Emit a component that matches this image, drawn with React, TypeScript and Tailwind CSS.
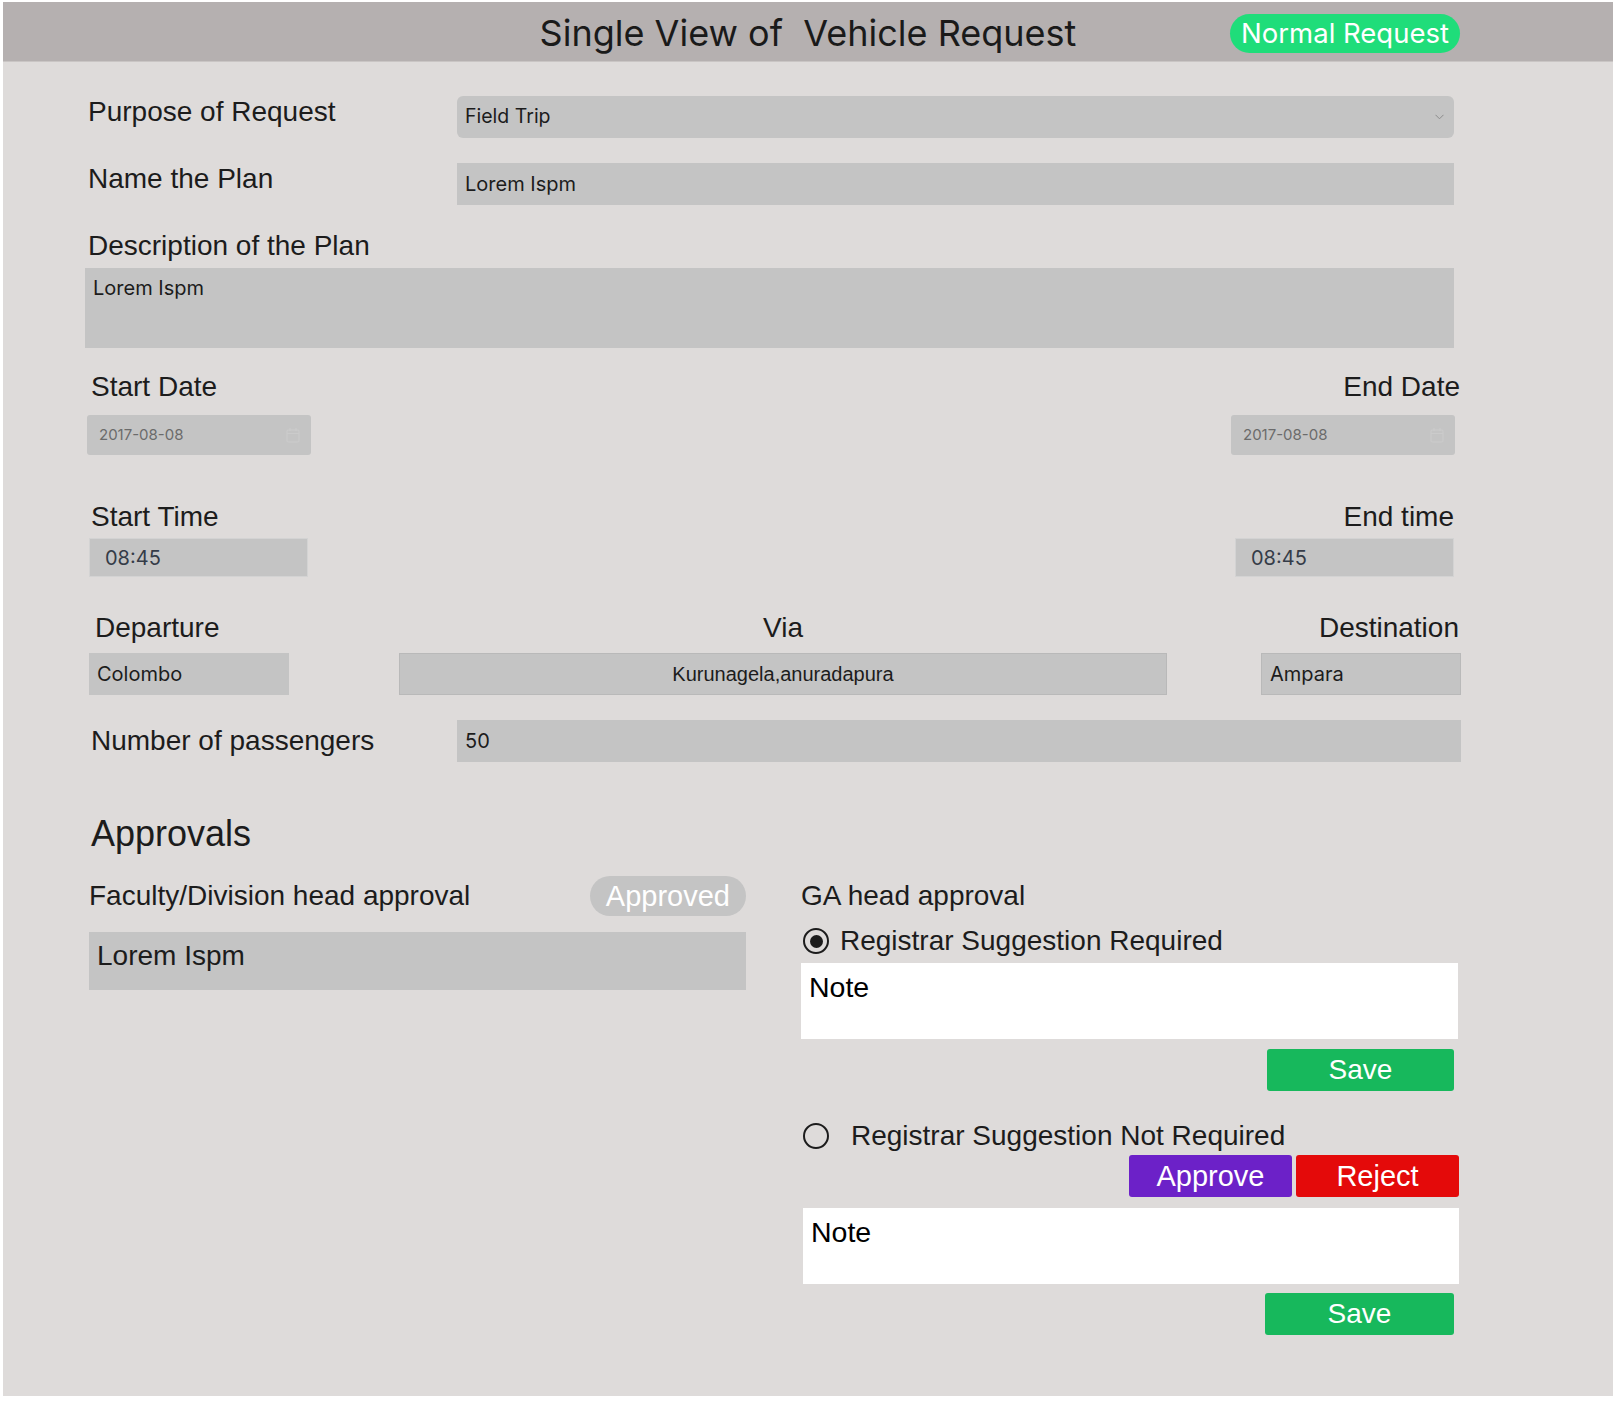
import React from "react";

const ARIAL = "font-['Liberation_Sans',Arial,sans-serif]";

function Label({ children, className = "" }: { children: React.ReactNode; className?: string }) {
  return (
    <div className={`${ARIAL} text-[28px] leading-[32px] text-[#1c1c1c] whitespace-nowrap ${className}`}>{children}</div>
  );
}

function DateBox({ className = "" }: { className?: string }) {
  return (
    <div className={`h-[40px] w-[224px] rounded-[3px] bg-[#c4c4c4] flex items-center justify-between pl-[12px] pr-[11px] ${className}`}>
      <span className="text-[15px] text-[#6b6b6b]">2017-08-08</span>
      <svg width="14" height="16" viewBox="0 0 14 16" fill="none">
        <rect x="1" y="3" width="12" height="12" rx="1.5" stroke="#cbcbcb" strokeWidth="1.2" />
        <line x1="1" y1="6.5" x2="13" y2="6.5" stroke="#cbcbcb" strokeWidth="1.2" />
        <line x1="4" y1="1" x2="4" y2="4" stroke="#cbcbcb" strokeWidth="1.2" />
        <line x1="10" y1="1" x2="10" y2="4" stroke="#cbcbcb" strokeWidth="1.2" />
      </svg>
    </div>
  );
}

function TimeBox({ className = "" }: { className?: string }) {
  return (
    <div className={`h-[39px] w-[219px] bg-[#c4c4c4] border border-[#d3d3d3] flex items-center pl-[15px] ${className}`}>
      <span className="text-[20px] text-[#353c48]">08:45</span>
    </div>
  );
}

function Radio({ checked }: { checked: boolean }) {
  return (
    <span className="w-[26px] h-[26px] rounded-full border-[2.5px] border-[#1c1c1c] flex items-center justify-center shrink-0">
      {checked && <span className="w-[13px] h-[13px] rounded-full bg-[#1c1c1c]" />}
    </span>
  );
}

export default function App() {
  return (
    <div className="bg-white pl-[3px] pt-[2px] pr-[2px] pb-[6px] font-['Inter',sans-serif] text-[#1c1c1c]">
      <div className="bg-[#dedbda] h-[1394px]">
        <header className="h-[60px] bg-[#b5b0b0] border-b border-[#c9c5c4] grid grid-cols-[1fr_auto_1fr] items-center">
          <div />
          <h1 className="text-[36px] leading-[42px] text-[#1a1a1a] whitespace-pre pt-[2px]">Single View of  Vehicle Request</h1>
          <div className="flex justify-end pr-[153px] pt-[3px]">
            <span className="h-[39px] px-[11px] rounded-full bg-[#1fdd7a] text-white text-[27.5px] leading-[39px] whitespace-nowrap">
              Normal Request
            </span>
          </div>
        </header>

        <main className="pl-[85px] pr-[152px]">
          {/* Purpose */}
          <div className="flex items-start mt-[34px]">
            <Label className="w-[369px]">Purpose of Request</Label>
            <div className="w-[997px] h-[42px] rounded-[6px] bg-[#c4c4c4] flex items-center justify-between pl-[8px] pr-[10px]">
              <span className="text-[19.5px]">Field Trip</span>
              <svg width="9" height="6" viewBox="0 0 9 6" fill="none">
                <path d="M0.5 0.8 L4.5 4.8 L8.5 0.8" stroke="#8c8c8c" strokeWidth="1" />
              </svg>
            </div>
          </div>

          {/* Name */}
          <div className="flex items-start mt-[25px]">
            <Label className="w-[369px]">Name the Plan</Label>
            <div className="w-[997px] h-[42px] bg-[#c4c4c4] flex items-center pl-[8px]">
              <span className="text-[20px]">Lorem Ispm</span>
            </div>
          </div>

          {/* Description */}
          <Label className="mt-[25px]">Description of the Plan</Label>
          <div className="-ml-[3px] w-[1369px] h-[80px] mt-[6px] bg-[#c4c4c4] pl-[8px] pt-[5px]">
            <span className="text-[20px]">Lorem Ispm</span>
          </div>

          {/* Dates */}
          <div className="flex justify-between mt-[23px] pl-[3px] pr-[1px]">
            <Label>Start Date</Label>
            <Label>End Date</Label>
          </div>
          <div className="flex justify-between mt-[12px] -ml-[1px] pr-[6px]">
            <DateBox />
            <DateBox />
          </div>

          {/* Times */}
          <div className="flex justify-between mt-[46px] pl-[3px] pr-[7px]">
            <Label>Start Time</Label>
            <Label>End time</Label>
          </div>
          <div className="flex justify-between mt-[5px] pl-[1px] pr-[7px]">
            <TimeBox />
            <TimeBox />
          </div>

          {/* Route */}
          <div className="flex mt-[35px]">
            <div className="ml-[1px] w-[200px]">
              <Label className="pl-[6px]">Departure</Label>
              <div className="mt-[9px] h-[42px] bg-[#c4c4c4] flex items-center pl-[8px]">
                <span className="text-[20px]">Colombo</span>
              </div>
            </div>
            <div className="ml-[110px] w-[768px]">
              <Label className="text-center">Via</Label>
              <div className="mt-[9px] h-[42px] bg-[#c4c4c4] border border-[#b9b9b9] flex items-center justify-center">
                <span className={`${ARIAL} text-[20px]`}>Kurunagela,anuradapura</span>
              </div>
            </div>
            <div className="ml-[94px] w-[200px]">
              <Label className="text-right pr-[2px]">Destination</Label>
              <div className="mt-[9px] h-[42px] bg-[#c4c4c4] border border-[#b9b9b9] flex items-center pl-[8px]">
                <span className="text-[20px]">Ampara</span>
              </div>
            </div>
          </div>

          {/* Passengers */}
          <div className="flex items-center mt-[25px]">
            <Label className="w-[369px] pl-[3px]">Number of passengers</Label>
            <div className="w-[1004px] h-[42px] bg-[#c4c4c4] flex items-center pl-[8px]">
              <span className="text-[20px]">50</span>
            </div>
          </div>

          {/* Approvals */}
          <h2 className={`${ARIAL} mt-[52px] ml-[3px] text-[36px] leading-[40px]`}>Approvals</h2>

          <div className={`${ARIAL} flex mt-[22px]`}>
            <div className="ml-[1px] w-[657px]">
              <div className="flex items-center justify-between h-[40px]">
                <span className="text-[28px] leading-[32px] whitespace-nowrap">Faculty/Division head approval</span>
                <span className="h-[40px] px-[16px] rounded-full bg-[#c4c4c4] text-white text-[29px] leading-[40px]">Approved</span>
              </div>
              <div className="mt-[16px] h-[58px] bg-[#c4c4c4] pl-[8px] pt-[7px]">
                <span className="text-[28px] leading-[34px]">Lorem Ispm</span>
              </div>
            </div>

            <div className="ml-[55px] w-[660px]">
              <div className="mt-[4px] text-[28px] leading-[32px] whitespace-nowrap">GA head approval</div>
              <div className="mt-[13px] flex items-center h-[32px] pl-[2px]">
                <Radio checked />
                <span className="ml-[11px] text-[28px] leading-[32px] whitespace-nowrap">Registrar Suggestion Required</span>
              </div>
              <div className="mt-[6px] w-[657px] h-[76px] bg-white pl-[8px] pt-[7px]">
                <span className="text-[28.5px] leading-[34px] text-black">Note</span>
              </div>
              <div className="flex justify-end pr-[7px] mt-[10px]">
                <button className="w-[187px] h-[42px] rounded-[3px] bg-[#17b85c] text-white text-[28px] leading-[42px]">Save</button>
              </div>

              <div className="mt-[29px] flex items-center h-[32px] pl-[2px]">
                <Radio checked={false} />
                <span className="ml-[22px] text-[28px] leading-[32px] whitespace-nowrap">Registrar Suggestion Not Required</span>
              </div>
              <div className="mt-[3px] flex justify-end gap-[4px] pr-[2px]">
                <button className="w-[163px] h-[42px] rounded-[3px] bg-[#6c21c8] text-white text-[29px] leading-[42px]">Approve</button>
                <button className="w-[163px] h-[42px] rounded-[3px] bg-[#e40a0a] text-white text-[29px] leading-[42px]">Reject</button>
              </div>
              <div className="mt-[11px] ml-[2px] w-[656px] h-[76px] bg-white pl-[8px] pt-[7px]">
                <span className="text-[28.5px] leading-[34px] text-black">Note</span>
              </div>
              <div className="flex justify-end pr-[7px] mt-[9px]">
                <button className="w-[189px] h-[42px] rounded-[3px] bg-[#17b85c] text-white text-[28px] leading-[42px]">Save</button>
              </div>
            </div>
          </div>
        </main>
      </div>
    </div>
  );
}
